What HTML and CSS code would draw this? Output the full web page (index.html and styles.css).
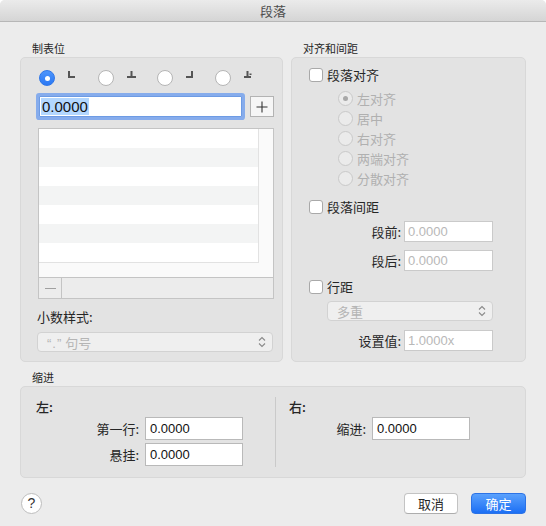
FILE: index.html
```html
<!DOCTYPE html>
<html lang="zh-CN">
<head>
<meta charset="utf-8">
<title>段落</title>
<link rel="stylesheet" href="styles.css">
</head>
<body>
<div class="window">
  <div class="titlebar">段落</div>
  <div class="content">
    <div class="top-row">
      <section class="group tabs">
        <div class="group-label">制表位</div>
        <div class="box">
          <div class="tab-types">
            <div class="tab-opt">
              <span class="radio on"></span>
              <svg class="tab-icon" width="10" height="8" viewBox="0 0 10 8"><rect x="0" y="0" width="2" height="7" fill="#555"/><rect x="0" y="5" width="7" height="2" fill="#555"/></svg>
            </div>
            <div class="tab-opt">
              <span class="radio"></span>
              <svg class="tab-icon" width="10" height="8" viewBox="0 0 10 8"><rect x="3.5" y="0" width="2" height="7" fill="#555"/><rect x="0" y="5" width="9" height="2" fill="#555"/></svg>
            </div>
            <div class="tab-opt">
              <span class="radio"></span>
              <svg class="tab-icon" width="10" height="8" viewBox="0 0 10 8"><rect x="5" y="0" width="2" height="7" fill="#555"/><rect x="0" y="5" width="7" height="2" fill="#555"/></svg>
            </div>
            <div class="tab-opt">
              <span class="radio"></span>
              <svg class="tab-icon" width="10" height="8" viewBox="0 0 10 8"><rect x="2.5" y="0" width="2" height="7" fill="#555"/><rect x="0" y="5" width="7" height="2" fill="#555"/><rect x="5.5" y="2.5" width="2" height="1.5" fill="#555"/></svg>
            </div>
          </div>
          <div class="field-row">
            <div class="tab-field"><span class="sel">0.0000</span></div>
            <div class="plus-btn"><svg width="12" height="12" viewBox="0 0 12 12"><path d="M6 0.5V11.5M0.5 6H11.5" stroke="#333" stroke-width="1.1" fill="none"/></svg></div>
          </div>
          <div class="list">
            <div class="list-body">
              <div class="rows">
                <div class="row"></div><div class="row alt"></div><div class="row"></div><div class="row alt"></div><div class="row"></div><div class="row alt"></div><div class="row"></div>
              </div>
            </div>
            <div class="list-bar">
              <div class="minus-btn"><span class="minus"></span></div>
            </div>
          </div>
          <div class="dec-label">小数样式:</div>
          <div class="popup disabled wide"><span><span class="latin">“.”</span> 句号</span><svg class="chev" width="8" height="12" viewBox="0 0 8 12"><path d="M1 4.5L4 1.5L7 4.5M1 7.5L4 10.5L7 7.5" stroke="#8a8a8a" stroke-width="1.1" fill="none"/></svg></div>
        </div>
      </section>
      <section class="group align">
        <div class="group-label">对齐和间距</div>
        <div class="box">
          <label class="check-row"><span class="checkbox"></span><span>段落对齐</span></label>
          <div class="radio-list">
            <div class="radio-row"><span class="radio dis on"></span><span>左对齐</span></div>
            <div class="radio-row"><span class="radio dis"></span><span>居中</span></div>
            <div class="radio-row"><span class="radio dis"></span><span>右对齐</span></div>
            <div class="radio-row"><span class="radio dis"></span><span>两端对齐</span></div>
            <div class="radio-row"><span class="radio dis"></span><span>分散对齐</span></div>
          </div>
          <label class="check-row spacing"><span class="checkbox"></span><span>段落间距</span></label>
          <div class="num-row first"><span class="num-label">段前:</span><div class="num-field dim">0.0000</div></div>
          <div class="num-row"><span class="num-label">段后:</span><div class="num-field dim">0.0000</div></div>
          <label class="check-row line"><span class="checkbox"></span><span>行距</span></label>
          <div class="popup disabled line-pop"><span>多重</span><svg class="chev" width="8" height="12" viewBox="0 0 8 12"><path d="M1 4.5L4 1.5L7 4.5M1 7.5L4 10.5L7 7.5" stroke="#8a8a8a" stroke-width="1.1" fill="none"/></svg></div>
          <div class="num-row set"><span class="num-label">设置值:</span><div class="num-field dim">1.0000x</div></div>
        </div>
      </section>
    </div>
    <section class="group indent">
      <div class="group-label">缩进</div>
      <div class="box indent-box">
        <div class="ind-col left">
          <div class="ind-head">左:</div>
          <div class="ind-row"><span class="ind-label l">第一行:</span><div class="ind-field">0.0000</div></div>
          <div class="ind-row second"><span class="ind-label l">悬挂:</span><div class="ind-field">0.0000</div></div>
        </div>
        <div class="divider"></div>
        <div class="ind-col right">
          <div class="ind-head">右:</div>
          <div class="ind-row"><span class="ind-label r">缩进:</span><div class="ind-field">0.0000</div></div>
        </div>
      </div>
    </section>
    <div class="footer">
      <div class="help">?</div>
      <div class="spacer"></div>
      <div class="btn cancel">取消</div>
      <div class="btn ok">确定</div>
    </div>
  </div>
</div>
</body>
</html>
```
FILE: styles.css
```css
* { box-sizing: border-box; }
html, body { margin: 0; padding: 0; }
body {
  width: 546px;
  height: 526px;
  background: #ffffff;
  font-family: "Noto Sans CJK SC", "Noto Sans", sans-serif;
  font-size: 13px;
  color: #262626;
  overflow: hidden;
}
.window {
  width: 546px;
  height: 526px;
  background: #ececec;
  border-radius: 5px 5px 0 0;
  overflow: hidden;
  display: flex;
  flex-direction: column;
}
.titlebar {
  height: 22px;
  flex: none;
  background: linear-gradient(#ebebeb, #d5d5d5);
  border-bottom: 1px solid #b7b7b7;
  text-align: center;
  font-size: 13px;
  line-height: 21px;
  color: #4d4d4d;
}
.content { padding: 19px 20px 0 20px; }
.top-row { display: flex; gap: 8px; }
.group-label {
  font-size: 11px;
  line-height: 14px;
  margin: 0 0 2px 12px;
  color: #262626;
}
.box {
  background: #e3e3e3;
  border: 1px solid #d8d8d8;
  border-radius: 5px;
}
.tabs { width: 263px; }
.align { width: 235px; }
.tabs .box, .align .box { height: 305px; }

/* tab stops */
.tabs .box { padding: 12px 8px 0 18px; }
.tab-types { display: flex; height: 16px; }
.tab-opt { width: 62px; display: flex; align-items: flex-start; }
.tab-icon { margin: 1px 0 0 13px; }
.radio {
  width: 16px;
  height: 16px;
  flex: none;
  border-radius: 50%;
  background: #ffffff;
  border: 1px solid #b5b5b5;
  position: relative;
}
.radio.on {
  background: linear-gradient(#4d95fb, #2a78f4);
  border-color: #2f76e8;
}
.radio.on::after {
  content: "";
  position: absolute;
  left: 4.5px;
  top: 4.5px;
  width: 5px;
  height: 5px;
  border-radius: 50%;
  background: #ffffff;
}
.field-row { display: flex; margin-top: 10px; }
.tab-field {
  width: 203px;
  height: 21px;
  background: #ffffff;
  border: 1px solid #6d9be4;
  box-shadow: 0 0 0 3px #86acec;
  border-radius: 1px;
  font-family: "Liberation Sans", Arial, sans-serif;
  font-size: 15px;
  line-height: 19px;
  padding-left: 1px;
  color: #111;
}
.sel { background: #b3d7ff; display: inline-block; line-height: 17px; padding: 0 1px; }
.plus-btn {
  width: 24px;
  height: 21px;
  margin-left: 8px;
  background: #f6f6f6;
  border: 1px solid #b3b3b3;
  display: flex;
  align-items: center;
  justify-content: center;
}
.list {
  width: 236px;
  margin: 11px 0 0 -1px;
  border: 1px solid #c4c4c4;
  background: #fafafa;
}
.list-body { height: 148px; background: #fafafa; }
.rows {
  width: 220px;
  border-right: 1px solid #e2e2e2;
  border-bottom: 1px solid #e2e2e2;
}
.row { height: 19px; background: #ffffff; }
.row.alt { background: #f3f4f4; }
.list-bar {
  height: 21px;
  border-top: 1px solid #c4c4c4;
  background: #ececec;
  display: flex;
}
.minus-btn {
  width: 23px;
  border-right: 1px solid #c4c4c4;
  display: flex;
  align-items: center;
  justify-content: center;
}
.minus { width: 11px; height: 1px; background: #a0a0a0; }
.dec-label { margin: 10px 0 0 -2px; line-height: 16px; font-size: 13px; }
.popup {
  height: 20px;
  border: 1px solid #d2d2d2;
  border-radius: 4px;
  background: #efefef;
  display: flex;
  align-items: center;
  justify-content: space-between;
  padding: 0 6px 0 9px;
  color: #b5b5b5;
  font-size: 13px;
}
.latin { font-family: "Liberation Sans", Arial, sans-serif; letter-spacing: 1px; }
.popup.wide { width: 236px; margin: 7px 0 0 -2px; }

/* alignment */
.align .box { padding: 9px 32px 0 17px; }
.check-row { display: flex; align-items: center; gap: 4px; height: 16px; line-height: 16px; }
.checkbox {
  width: 14px;
  height: 14px;
  background: #ffffff;
  border: 1px solid #a9a9a9;
  border-radius: 3px;
  flex: none;
}
.radio-list { margin: 5px 0 0 29px; }
.radio-row { display: flex; align-items: center; gap: 4px; height: 20px; color: #b0b0b0; }
.radio.dis { width: 15px; height: 15px; background: #ebebeb; border-color: #c9c9c9; }
.radio.dis.on::after {
  content: "";
  position: absolute;
  left: 4px;
  top: 4px;
  width: 5px;
  height: 5px;
  border-radius: 50%;
  background: #a8a8a8;
}
.check-row.spacing { margin-top: 11px; }
.num-row { display: flex; justify-content: flex-end; align-items: center; gap: 3px; margin-top: 8px; }
.num-row.first { margin-top: 6px; }
.num-row.set { margin-top: 9px; }
.num-field {
  width: 89px;
  height: 21px;
  background: #ffffff;
  border: 1px solid #cacaca;
  font-family: "Liberation Sans", Arial, sans-serif;
  font-size: 13px;
  line-height: 19px;
  padding-left: 3px;
}
.num-field.dim { color: #b8b8b8; }
.check-row.line { margin-top: 8px; }
.popup.line-pop { margin: 6px 0 0 18px; padding-left: 9px; }

/* indent */
.indent { margin-top: 8px; }
.indent-box { height: 92px; display: flex; }
.ind-col.left { width: 254px; padding: 12px 0 0 15px; }
.ind-col.right { flex: 1; padding: 12px 0 0 13px; }
.ind-head { line-height: 16px; font-weight: 500; }
.ind-row { display: flex; align-items: center; gap: 6px; margin-top: 2px; }
.ind-row.second { margin-top: 3px; }
.ind-label { text-align: right; }
.ind-label.l { width: 103px; }
.ind-label.r { width: 77px; }
.ind-field {
  width: 98px;
  height: 23px;
  background: #ffffff;
  border: 1px solid #b9b9b9;
  font-family: "Liberation Sans", Arial, sans-serif;
  font-size: 13px;
  line-height: 21px;
  padding-left: 4px;
  color: #111;
}
.divider { width: 1px; background: #cacaca; margin: 10px 0 10px 0; }

/* footer */
.footer { display: flex; align-items: center; margin-top: 14px; height: 22px; gap: 13px; }
.spacer { flex: 1; }
.help {
  width: 21px;
  height: 21px;
  margin-left: 1px;
  border-radius: 50%;
  background: #ffffff;
  border: 1px solid #bdbdbd;
  text-align: center;
  line-height: 19px;
  font-family: "Liberation Sans", Arial, sans-serif;
  font-size: 14px;
  color: #333;
}
.btn {
  height: 21px;
  border-radius: 4px;
  text-align: center;
  line-height: 19px;
  font-size: 13px;
}
.btn.cancel { width: 54px; background: #ffffff; border: 1px solid #c3c3c3; border-bottom-color: #adadad; color: #262626; }
.btn.ok { width: 55px; background: linear-gradient(#5aa1fd, #1c6ff4); border: 1px solid #2c73e6; color: #ffffff; }
```
